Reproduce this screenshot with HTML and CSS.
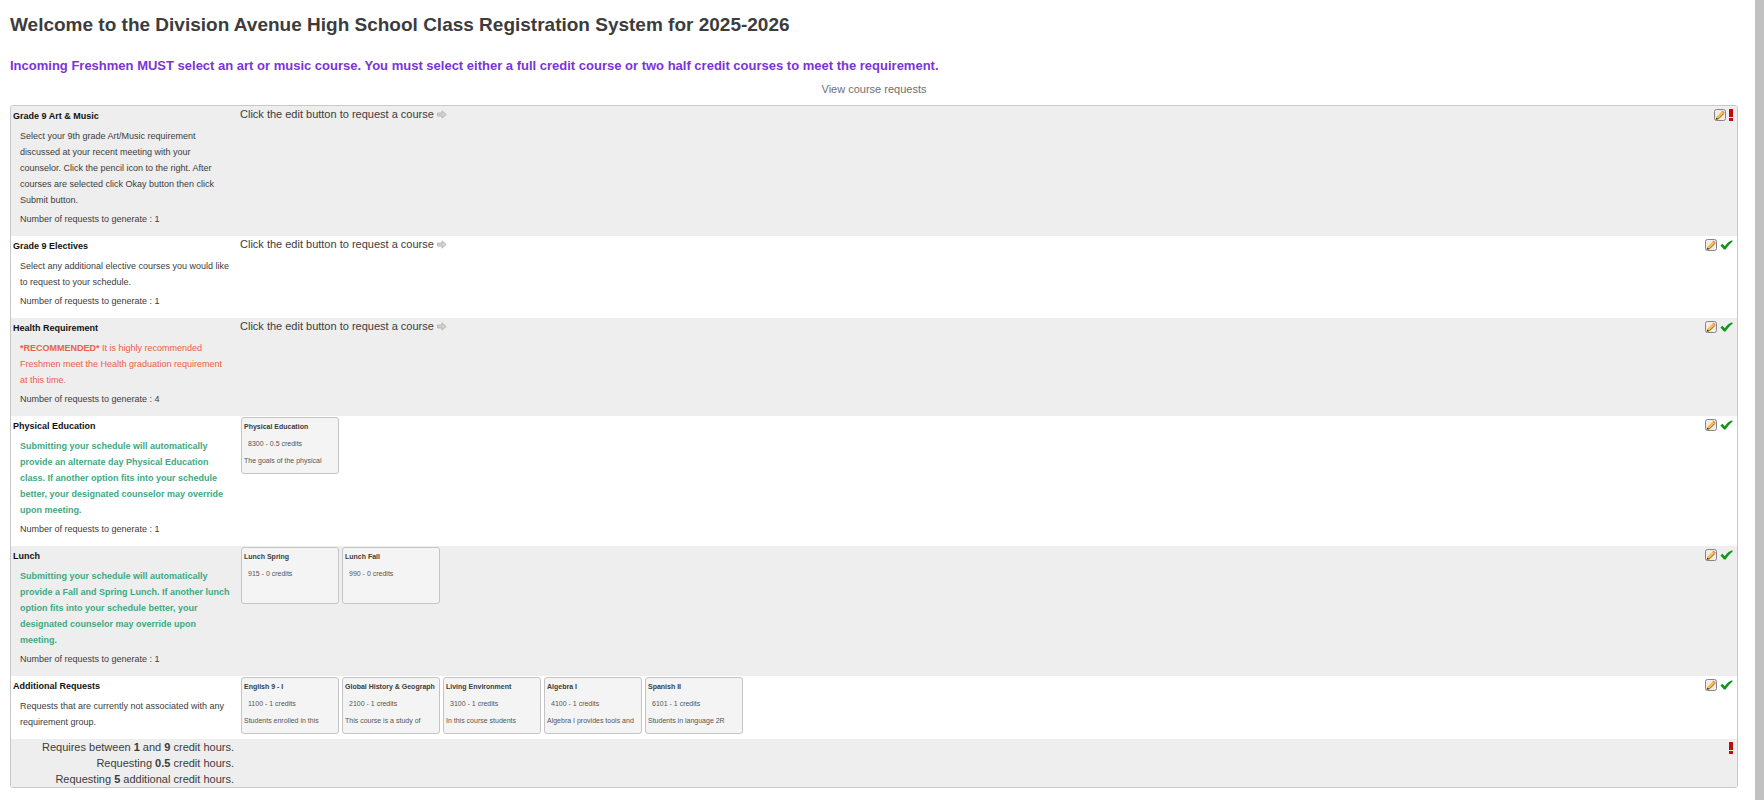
FILE: index.html
```html
<!DOCTYPE html>
<html lang="en">
<head>
    <meta charset="UTF-8">
    <meta name="viewport" content="width=device-width, initial-scale=1.0">
    <title>Class Registration</title>
    <link rel="stylesheet" href="styles.css">
</head>
<body>
    <!-- Shared icons -->
    <svg class="icon-defs" aria-hidden="true">
        <symbol id="icon-edit" viewBox="0 0 12 12">
            <rect x="0.5" y="0.5" width="11" height="11" rx="2" fill="#f1ece6" stroke="#858585"/>
            <path d="M1.8 10.4 L2.6 7.4 L7.6 2.4 L9.8 4.6 L4.8 9.6 Z" fill="#f6bf4a"/>
            <path d="M2.4 10.4 L4.8 9.6 L9.8 4.6" fill="none" stroke="#8a5a1c" stroke-width="1"/>
            <path d="M7.4 2.6 L8.8 1.4 L10.8 3.4 L9.6 4.8 Z" fill="#e58a84"/>
            <path d="M1.6 10.6 L2.3 8.4 L4 10 Z" fill="#3c3424"/>
        </symbol>
        <symbol id="icon-check" viewBox="0 0 13 12">
            <path d="M0.4 6.4 L2.4 4.8 L4.8 7.2 C6.6 4.4 9 2.2 12.2 1.2 L12.6 2.8 C9.8 4.8 7.6 7.2 5.6 10.6 L4 10.6 Z" fill="#109618"/>
        </symbol>
        <symbol id="icon-alert" viewBox="0 0 4 12">
            <path d="M0 0 H4 V8 H0 Z M0 9 H4 V12 H0 Z" fill="#c00c0c"/>
        </symbol>
        <symbol id="icon-arrow" viewBox="0 0 10 9">
            <path d="M0.5 3 H5 V0.8 L9.2 4.5 L5 8.2 V6 H0.5 Z" fill="#d0d0d0" stroke="#b0b0b0" stroke-width="0.8"/>
        </symbol>
    </svg>

    <div class="page">
        <main class="content">
            <h1>Welcome to the Division Avenue High School Class Registration System for 2025-2026</h1>
            <h2>Incoming Freshmen MUST select an art or music course. You must select either a full credit course or two half credit courses to meet the requirement.</h2>
            <div class="view-link"><a href="#">View course requests</a></div>

            <table class="requests">
                <tbody>
                    <tr>
                        <th scope="row" class="group">
                            <div class="group-name">Grade 9 Art &amp; Music</div>
                            <p class="group-desc">Select your 9th grade Art/Music requirement discussed at your recent meeting with your counselor. Click the pencil icon to the right. After courses are selected click Okay button then click Submit button.</p>
                            <p class="group-count">Number of requests to generate : 1</p>
                        </th>
                        <td class="courses">Click the edit button to request a course <svg class="arrow"><use href="#icon-arrow"/></svg></td>
                        <td class="actions">
                            <div class="action-icons">
                                <button type="button" class="edit-btn" aria-label="Edit Grade 9 Art &amp; Music"><svg class="edit"><use href="#icon-edit"/></svg></button>
                                <svg class="alert"><use href="#icon-alert"/></svg>
                            </div>
                        </td>
                    </tr>
                    <tr>
                        <th scope="row" class="group">
                            <div class="group-name">Grade 9 Electives</div>
                            <p class="group-desc">Select any additional elective courses you would like to request to your schedule.</p>
                            <p class="group-count">Number of requests to generate : 1</p>
                        </th>
                        <td class="courses">Click the edit button to request a course <svg class="arrow"><use href="#icon-arrow"/></svg></td>
                        <td class="actions">
                            <div class="action-icons">
                                <button type="button" class="edit-btn" aria-label="Edit Grade 9 Electives"><svg class="edit"><use href="#icon-edit"/></svg></button>
                                <svg class="check"><use href="#icon-check"/></svg>
                            </div>
                        </td>
                    </tr>
                    <tr>
                        <th scope="row" class="group">
                            <div class="group-name">Health Requirement</div>
                            <p class="group-desc recommended"><strong>*RECOMMENDED*</strong> It is highly recommended Freshmen meet the Health graduation requirement at this time.</p>
                            <p class="group-count">Number of requests to generate : 4</p>
                        </th>
                        <td class="courses">Click the edit button to request a course <svg class="arrow"><use href="#icon-arrow"/></svg></td>
                        <td class="actions">
                            <div class="action-icons">
                                <button type="button" class="edit-btn" aria-label="Edit Health Requirement"><svg class="edit"><use href="#icon-edit"/></svg></button>
                                <svg class="check"><use href="#icon-check"/></svg>
                            </div>
                        </td>
                    </tr>
                    <tr>
                        <th scope="row" class="group">
                            <div class="group-name">Physical Education</div>
                            <p class="group-desc automatic">Submitting your schedule will automatically provide an alternate day Physical Education class. If another option fits into your schedule better, your designated counselor may override upon meeting.</p>
                            <p class="group-count">Number of requests to generate : 1</p>
                        </th>
                        <td class="courses">
                            <div class="cards">
                                <div class="card">
                                    <div class="card-title">Physical Education</div>
                                    <div class="card-code">8300 - 0.5 credits</div>
                                    <div class="card-text">The goals of the physical</div>
                                </div>
                            </div>
                        </td>
                        <td class="actions">
                            <div class="action-icons">
                                <button type="button" class="edit-btn" aria-label="Edit Physical Education"><svg class="edit"><use href="#icon-edit"/></svg></button>
                                <svg class="check"><use href="#icon-check"/></svg>
                            </div>
                        </td>
                    </tr>
                    <tr>
                        <th scope="row" class="group">
                            <div class="group-name">Lunch</div>
                            <p class="group-desc automatic">Submitting your schedule will automatically provide a Fall and Spring Lunch. If another lunch option fits into your schedule better, your designated counselor may override upon meeting.</p>
                            <p class="group-count">Number of requests to generate : 1</p>
                        </th>
                        <td class="courses">
                            <div class="cards">
                                <div class="card">
                                    <div class="card-title">Lunch Spring</div>
                                    <div class="card-code">915 - 0 credits</div>
                                </div>
                                <div class="card">
                                    <div class="card-title">Lunch Fall</div>
                                    <div class="card-code">990 - 0 credits</div>
                                </div>
                            </div>
                        </td>
                        <td class="actions">
                            <div class="action-icons">
                                <button type="button" class="edit-btn" aria-label="Edit Lunch"><svg class="edit"><use href="#icon-edit"/></svg></button>
                                <svg class="check"><use href="#icon-check"/></svg>
                            </div>
                        </td>
                    </tr>
                    <tr>
                        <th scope="row" class="group">
                            <div class="group-name">Additional Requests</div>
                            <p class="group-desc">Requests that are currently not associated with any requirement group.</p>
                        </th>
                        <td class="courses">
                            <div class="cards">
                                <div class="card">
                                    <div class="card-title">English 9 - I</div>
                                    <div class="card-code">1100 - 1 credits</div>
                                    <div class="card-text">Students enrolled in this</div>
                                </div>
                                <div class="card">
                                    <div class="card-title">Global History &amp; Geograph</div>
                                    <div class="card-code">2100 - 1 credits</div>
                                    <div class="card-text">This course is a study of</div>
                                </div>
                                <div class="card">
                                    <div class="card-title">Living Environment</div>
                                    <div class="card-code">3100 - 1 credits</div>
                                    <div class="card-text">In this course students</div>
                                </div>
                                <div class="card">
                                    <div class="card-title">Algebra I</div>
                                    <div class="card-code">4100 - 1 credits</div>
                                    <div class="card-text">Algebra I provides tools and</div>
                                </div>
                                <div class="card">
                                    <div class="card-title">Spanish II</div>
                                    <div class="card-code">6101 - 1 credits</div>
                                    <div class="card-text">Students in language 2R</div>
                                </div>
                            </div>
                        </td>
                        <td class="actions">
                            <div class="action-icons">
                                <button type="button" class="edit-btn" aria-label="Edit Additional Requests"><svg class="edit"><use href="#icon-edit"/></svg></button>
                                <svg class="check"><use href="#icon-check"/></svg>
                            </div>
                        </td>
                    </tr>
                </tbody>
                <tfoot>
                    <tr>
                        <td class="totals">
                            <div>Requires between <b>1</b> and <b>9</b> credit hours.</div>
                            <div>Requesting <b>0.5</b> credit hours.</div>
                            <div>Requesting <b>5</b> additional credit hours.</div>
                        </td>
                        <td></td>
                        <td class="actions">
                            <div class="action-icons">
                                <svg class="alert"><use href="#icon-alert"/></svg>
                            </div>
                        </td>
                    </tr>
                </tfoot>
            </table>
        </main>
        <div class="scroll-track"></div>
    </div>
</body>
</html>
```
FILE: styles.css
```css
* {
    box-sizing: border-box;
}

body {
    margin: 0;
    background: #fff;
    color: #3c3c3c;
    font-family: "Liberation Sans", Arial, sans-serif;
    font-size: 11px;
    line-height: 16px;
}

.icon-defs {
    display: none;
}

.page {
    display: flex;
    min-height: 100vh;
}

.content {
    flex: 1;
    padding: 12px 17px 12px 10px;
}

.scroll-track {
    width: 9px;
    background: #c1c1c1;
}

h1 {
    margin: 0 0 18px;
    font-size: 19px;
    line-height: 26px;
}

h2 {
    margin: 0 0 5px;
    color: #7a34d8;
    font-size: 13px;
    line-height: 20px;
}

.view-link {
    margin-bottom: 8px;
    text-align: center;
}

.view-link a {
    color: #707070;
    text-decoration: none;
}

.requests {
    width: 100%;
    border: 1px solid #c8c8c8;
    border-radius: 3px;
    border-spacing: 0;
    overflow: hidden;
}

.requests th,
.requests td {
    padding: 0;
    vertical-align: top;
    text-align: left;
    font-weight: normal;
}

.requests tbody tr:nth-child(odd),
.requests tfoot tr {
    background: #eee;
}

/* Requirement group column */
.requests .group {
    width: 229px;
    padding: 2px 8px 9px 2px;
    font-size: 9px;
}

.group-name {
    color: #111;
    font-weight: bold;
}

.group-desc {
    margin: 4px 0 0 7px;
}

.group-count {
    margin: 3px 0 0 7px;
}

.recommended {
    color: #e8604c;
}

.automatic {
    color: #3fa883;
    font-weight: bold;
}

.arrow {
    width: 10px;
    height: 9px;
    vertical-align: -1px;
}

/* Selected course cards */
.cards {
    display: flex;
    gap: 3px;
    padding: 1px;
}

.card {
    width: 98px;
    height: 57px;
    padding: 0 2px;
    overflow: hidden;
    background: #f4f4f4;
    border: 1px solid #c4c4c4;
    border-radius: 3px;
    font-size: 7px;
    line-height: 17px;
    white-space: nowrap;
}

.card-title {
    font-weight: bold;
}

.card-code {
    padding-left: 4px;
    color: #555;
}

.card-text {
    color: #555;
}

/* Status column */
.requests .actions {
    width: 40px;
    padding: 3px 4px 0 0;
}

.action-icons {
    display: flex;
    justify-content: flex-end;
    gap: 3px;
}

.edit-btn {
    display: flex;
    padding: 0;
    border: 0;
    background: none;
    cursor: pointer;
}

.edit {
    width: 12px;
    height: 12px;
}

.check {
    width: 13px;
    height: 12px;
}

.alert {
    width: 4px;
    height: 12px;
}

.requests .totals {
    padding-right: 6px;
    text-align: right;
}
```
